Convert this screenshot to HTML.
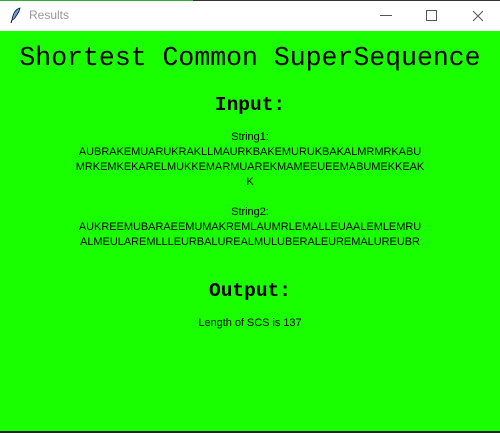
<!DOCTYPE html>
<html><head><style>
*{margin:0;padding:0}
body{width:500px;height:433px;overflow:hidden;background:#1aff00;position:relative;font-family:"Liberation Sans",sans-serif}
.tb{position:absolute;left:0;top:0;width:500px;height:31px;background:#fff}
.tl{position:absolute;top:0;left:0;height:1px;width:500px;background:#333}
.tl2{position:absolute;top:0;left:0;height:1px;width:193px;background:#3a3}
.t{position:absolute;left:29px;top:8px;font-size:12px;color:#999}
.c{position:absolute;left:0;width:500px;text-align:center;color:#000}
.m{font-family:"Liberation Mono",monospace}
.s{font-size:11px;line-height:15px;letter-spacing:-0.04px}
.bot{position:absolute;left:0;top:431px;width:500px;height:2px;background:#222}
</style></head><body>
<div class="tb"></div><div class="tl"></div><div class="tl2"></div>
<svg style="position:absolute;left:10px;top:7px" width="12" height="16" viewBox="0 0 12 16"><path d="M10 1 C6 2 3 6 2 13 L4 12 C6 9 9 6 10 1Z" fill="#6a9ad8" stroke="#113" stroke-width="0.8"/><path d="M2 13 L1 16" stroke="#000"/></svg>
<div class="t">Results</div>
<svg style="position:absolute;left:380px;top:8px" width="110" height="16"><path d="M0 7.5H12" stroke="#555"/><path d="M46.5 2.5h10v10h-10z" fill="none" stroke="#555"/><path d="M93 3l10 10M103 3l-10 10" stroke="#555"/></svg>
<div class="c m" style="top:43px;font-size:26.5px">Shortest Common SuperSequence</div>
<div class="c m" style="top:94px;font-size:19.5px;font-weight:bold">Input:</div>
<div class="c s" style="top:130px">String1:<br>AUBRAKEMUARUKRAKLLMAURKBAKEMURUKBAKALMRMRKABU<br>MRKEMKEKARELMUKKEMARMUAREKMAMEEUEEMABUMEKKEAK<br>K</div>
<div class="c s" style="top:205px">String2:<br>AUKREEMUBARAEEMUMAKREMLAUMRLEMALLEUAALEMLEMRU<br>ALMEULAREMLLLEURBALUREALMULUBERALEUREMALUREUBR</div>
<div class="c m" style="top:280px;font-size:19.5px;font-weight:bold">Output:</div>
<div class="c s" style="top:316px">Length of SCS is 137</div>
<div class="bot"></div>
</body></html>
